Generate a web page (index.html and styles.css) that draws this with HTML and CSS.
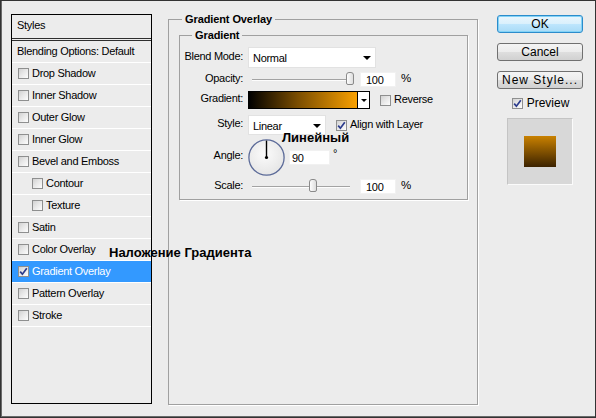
FILE: index.html
```html
<!DOCTYPE html>
<html>
<head>
<meta charset="utf-8">
<link rel="stylesheet" href="styles.css">
</head>
<body>
<div class="dialog">
  <div class="styles-panel">
    <div class="panel-head">Styles</div>
    <div class="row">Blending Options: Default</div>
    <div class="row"><span class="cb"></span>Drop Shadow</div>
    <div class="row"><span class="cb"></span>Inner Shadow</div>
    <div class="row"><span class="cb"></span>Outer Glow</div>
    <div class="row"><span class="cb"></span>Inner Glow</div>
    <div class="row"><span class="cb"></span>Bevel and Emboss</div>
    <div class="row sub"><span class="cb"></span>Contour</div>
    <div class="row sub"><span class="cb"></span>Texture</div>
    <div class="row"><span class="cb"></span>Satin</div>
    <div class="row"><span class="cb"></span>Color Overlay</div>
    <div class="row sel"><span class="cb"><svg class="tick" width="9" height="9" viewBox="0 0 9 9"><path d="M1.2 4.6 L3.4 7.2 L7.8 1.2" fill="none" stroke="#2b3b8c" stroke-width="1.7"/></svg></span>Gradient Overlay</div>
    <div class="row"><span class="cb"></span>Pattern Overlay</div>
    <div class="row"><span class="cb"></span>Stroke</div>
  </div>

  <fieldset class="group outer">
    <legend>Gradient Overlay</legend>
    <fieldset class="group inner">
      <legend>Gradient</legend>

      <div class="frow r1">
        <span class="lbl">Blend Mode:</span>
        <div class="select blend"><span>Normal</span><i class="arrow"></i></div>
      </div>

      <div class="frow r2">
        <span class="lbl">Opacity:</span>
        <div class="slider"><div class="track"></div><div class="thumb" style="left:98px"></div></div>
        <div class="num">100</div>
        <span class="unit">%</span>
      </div>

      <div class="frow r3">
        <span class="lbl">Gradient:</span>
        <div class="grad"><div class="grad-fill"></div><div class="grad-arrow"><i class="arrow small"></i></div></div>
        <span class="cb gap"></span><span class="cbtext">Reverse</span>
      </div>

      <div class="frow r4">
        <span class="lbl">Style:</span>
        <div class="select style"><span>Linear</span><i class="arrow"></i></div>
        <span class="cb gap"><svg class="tick" width="9" height="9" viewBox="0 0 9 9"><path d="M1.2 4.6 L3.4 7.2 L7.8 1.2" fill="none" stroke="#2b3b8c" stroke-width="1.7"/></svg></span><span class="cbtext">Align with Layer</span>
      </div>

      <div class="frow r5">
        <span class="lbl">Angle:</span>
        <svg class="dial" width="37" height="37" viewBox="0 0 37 37">
          <defs>
            <radialGradient id="dg" cx="45%" cy="40%" r="65%">
              <stop offset="0" stop-color="#fbfbfb"/>
              <stop offset="1" stop-color="#e4e4e4"/>
            </radialGradient>
          </defs>
          <circle cx="18.5" cy="18.5" r="17.6" fill="url(#dg)" stroke="#5b6a98" stroke-width="1.3"/>
          <line x1="18.5" y1="18.5" x2="18.5" y2="1.6" stroke="#000" stroke-width="1.4"/>
          <circle cx="18.5" cy="18.5" r="1.6" fill="#000"/>
        </svg>
        <div class="num angle">90</div>
        <span class="deg">°</span>
      </div>

      <div class="frow r6">
        <span class="lbl">Scale:</span>
        <div class="slider"><div class="track"></div><div class="thumb" style="left:61px"></div></div>
        <div class="num">100</div>
        <span class="unit">%</span>
      </div>
    </fieldset>
  </fieldset>

  <div class="buttons">
    <div class="btn ok">OK</div>
    <div class="btn">Cancel</div>
    <div class="btn wide">New Style...</div>
    <div class="preview-row"><span class="cb"><svg class="tick" width="9" height="9" viewBox="0 0 9 9"><path d="M1.2 4.6 L3.4 7.2 L7.8 1.2" fill="none" stroke="#2b3b8c" stroke-width="1.7"/></svg></span><span class="ptext">Preview</span></div>
    <div class="preview-box"><div class="swatch"></div></div>
  </div>

  <div class="note note-grad">Наложение Градиента</div>
  <div class="note note-lin">Линейный</div>
</div>
</body>
</html>
```

FILE: styles.css
```css
html, body {
  margin: 0;
  padding: 0;
  background: #ececec;
}

.dialog {
  position: relative;
  width: 596px;
  height: 418px;
  box-sizing: border-box;
  border: 1px solid #333;
  box-shadow: inset 1px -1px 0 #6a6a6a;
  background: #ececec;
  display: flex;
  align-items: flex-start;
  padding-top: 13px;
  font-family: "Liberation Sans", Arial, sans-serif;
  font-size: 11px;
  letter-spacing: -0.3px;
  color: #000;
}

/* ---------- left list ---------- */
.styles-panel {
  margin-left: 10px;
  width: 141px;
  height: 390px;
  box-sizing: border-box;
  border: 1px solid #000;
  flex: none;
}

.panel-head {
  height: 23px;
  line-height: 21px;
  padding-left: 5px;
  border-bottom: 3px double #2e2e2e;
  box-sizing: content-box;
}

.row {
  height: 21px;
  line-height: 21px;
  border-bottom: 1px solid #fff;
  padding-left: 6px;
  display: flex;
  align-items: center;
  white-space: nowrap;
}

.row:nth-child(2) {
  padding-left: 5px;
}

.row.sub {
  padding-left: 20px;
}

.row.sel {
  background: #3399ff;
  color: #fff;
}

.cb {
  flex: none;
  width: 11px;
  height: 11px;
  box-sizing: border-box;
  border: 1px solid #8e8f8f;
  background: linear-gradient(135deg, #d2d2d2 0%, #e9e9e9 50%, #fdfdfd 100%);
  margin-right: 3px;
  display: flex;
  align-items: center;
  justify-content: center;
}

.tick {
  display: block;
  flex: none;
}

/* ---------- fieldsets ---------- */
.group {
  margin: 0;
  box-sizing: border-box;
  border: 1px solid #a0a0a0;
  box-shadow: 1px 1px 0 #fff;
  min-width: 0;
}

.group > legend {
  font-weight: bold;
  font-size: 11px;
  line-height: 13px;
  letter-spacing: -0.1px;
  padding: 0 3px;
}

.outer {
  margin-left: 16px;
  margin-top: -1px;
  width: 310px;
  height: 392px;
  padding: 0 8px 0 10px;
  flex: none;
}

.outer > legend {
  margin-left: 3px;
}

.inner {
  margin-top: 3px;
  width: 289px;
  padding: 0 0 5px 0;
}

.inner > legend {
  margin-left: 12px;
}

.frow {
  display: flex;
  align-items: center;
  white-space: nowrap;
}

.r1 { margin-top: 5px; height: 21px; }
.r2 { margin-top: 4px; height: 15px; }
.r3 { margin-top: 4px; height: 18px; }
.r4 { margin-top: 6px; height: 20px; }
.r5 { margin-top: 4px; height: 36px; }
.r6 { margin-top: 4px; height: 15px; }

.lbl {
  flex: none;
  width: 63px;
  margin-right: 5px;
  text-align: right;
  line-height: 13px;
  padding-bottom: 3px;
}

.select {
  height: 100%;
  box-sizing: border-box;
  background: #fff;
  border: 1px solid #e2e2e2;
  display: flex;
  align-items: center;
  padding: 1px 4px 0 4px;
  justify-content: space-between;
}

.select.blend { width: 128px; }
.select.style { width: 78px; }

.arrow {
  display: block;
  width: 0;
  height: 0;
  border-left: 4px solid transparent;
  border-right: 4px solid transparent;
  border-top: 4px solid #000;
}

.arrow.small {
  border-left-width: 3px;
  border-right-width: 3px;
  border-top-width: 3px;
}

.slider {
  position: relative;
  width: 108px;
  height: 15px;
  display: flex;
  align-items: center;
  flex: none;
}

.track {
  margin-left: 4px;
  width: 98px;
  height: 2px;
  box-sizing: border-box;
  border-top: 1px solid #a3a3a3;
  border-bottom: 1px solid #fdfdfd;
}

.thumb {
  position: absolute;
  top: 0;
  width: 8px;
  height: 13px;
  box-sizing: border-box;
  border: 1px solid #8a8a8a;
  border-radius: 3px 3px 2px 2px;
  background: linear-gradient(90deg, #fdfdfd, #dedede);
}

.num {
  flex: none;
  margin-left: 4px;
  width: 36px;
  height: 15px;
  box-sizing: border-box;
  background: #fff;
  border: 1px solid #f1f1f1;
  line-height: 14px;
  padding-left: 5px;
}

.num.angle {
  width: 41px;
  padding-left: 2px;
}

.unit {
  margin-left: 5px;
  font-size: 11.5px;
  line-height: 13px;
  padding-bottom: 3px;
}

.deg {
  align-self: flex-start;
  margin-top: 8px;
  margin-left: 3px;
  font-size: 11px;
  line-height: 13px;
}

.grad {
  flex: none;
  display: flex;
  height: 18px;
  box-sizing: border-box;
  border: 1px solid #000;
}

.grad-fill {
  width: 108px;
  background: linear-gradient(90deg, #000 0%, #7a4d00 45%, #f9a000 100%);
}

.grad-arrow {
  width: 11px;
  border-left: 1px solid #000;
  background: #fff;
  display: flex;
  align-items: center;
  justify-content: center;
}

.cb.gap {
  margin-left: 10px;
}

.cbtext {
  line-height: 13px;
  padding-bottom: 1px;
}

.dial {
  display: block;
  flex: none;
}

/* ---------- buttons ---------- */
.buttons {
  margin-left: 19px;
  margin-top: 1px;
  width: 86px;
  flex: none;
  display: flex;
  flex-direction: column;
  align-items: center;
}

.btn {
  width: 86px;
  height: 18px;
  box-sizing: border-box;
  border: 1px solid #707070;
  border-radius: 3px;
  background: linear-gradient(#f4f4f4 0%, #ececec 50%, #dedede 51%, #d1d1d1 100%);
  font-size: 12px;
  letter-spacing: 0;
  line-height: 16px;
  text-align: center;
  margin-bottom: 10px;
}

.btn.ok {
  border-color: #2c8ccb;
  box-shadow: inset 0 0 0 1px #83d3f7;
  background: linear-gradient(#eaf6fd 0%, #d9f0fc 50%, #bee6fd 51%, #a9dbf6 100%);
}

.btn.wide {
  letter-spacing: 1px;
  margin-bottom: 8px;
}

.preview-row {
  display: flex;
  align-items: center;
  height: 13px;
  margin-left: 1px;
}

.preview-row .cb {
  margin-right: 4px;
}

.ptext {
  font-size: 12px;
  letter-spacing: 0;
  line-height: 13px;
}

.preview-box {
  margin-top: 8px;
  width: 66px;
  height: 67px;
  box-sizing: border-box;
  border: 1px solid #c4c4c4;
  border-right-color: #fbfbfb;
  border-bottom-color: #fbfbfb;
  background: #d8d8d8;
  display: flex;
  align-items: center;
  justify-content: center;
}

.swatch {
  width: 32px;
  height: 31px;
  background: linear-gradient(#c98100, #3b2200);
}

/* ---------- annotations ---------- */
.note {
  position: absolute;
  font-weight: bold;
  font-size: 13px;
  line-height: 15px;
  letter-spacing: 0;
  color: #000;
  white-space: nowrap;
}

.note-grad {
  left: 108px;
  top: 244px;
}

.note-lin {
  left: 281px;
  top: 129px;
}
```
